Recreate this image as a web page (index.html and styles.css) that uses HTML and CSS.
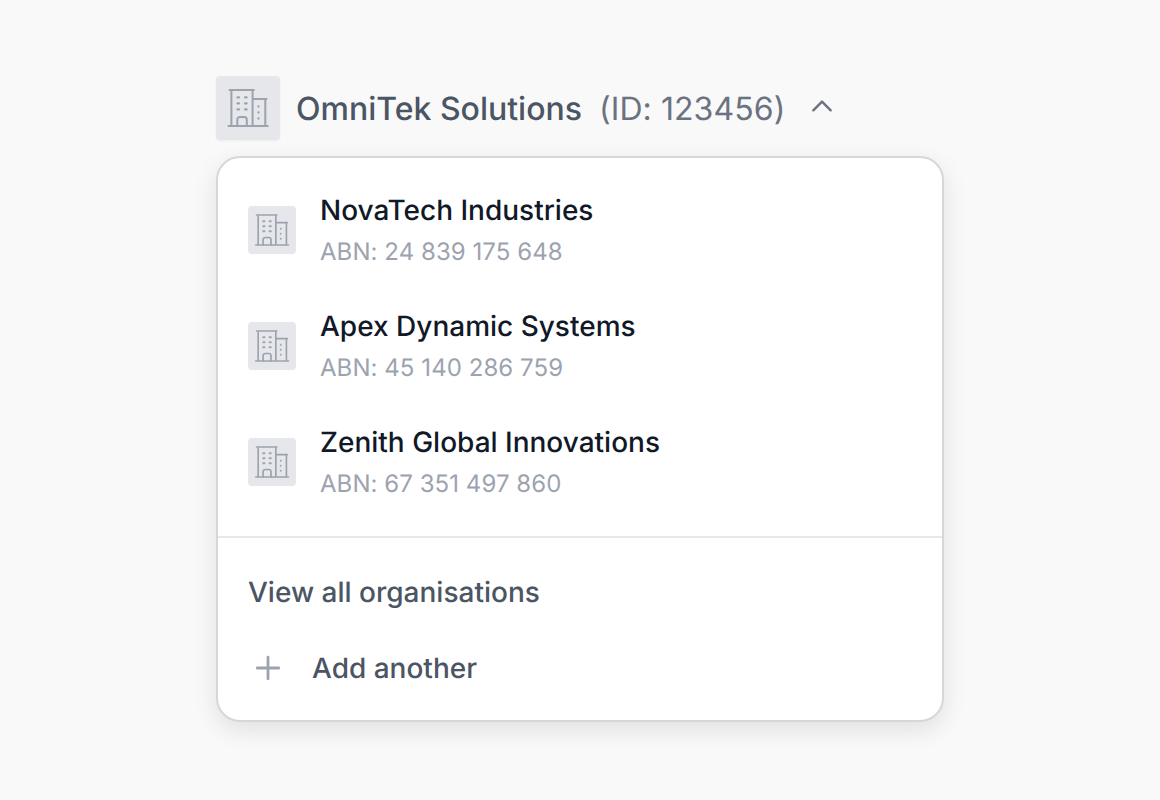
FILE: index.html
```html
<!DOCTYPE html>
<html lang="en">
<head>
  <meta charset="UTF-8" />
  <meta name="viewport" content="width=device-width, initial-scale=1.0"/>
  <title>Organisation switcher</title>
  <link rel="stylesheet" href="styles.css">
</head>
<body>
  <svg class="sprite" aria-hidden="true">
    <symbol id="building" viewBox="0 0 48 48">
      <g fill="none" stroke="currentColor" stroke-width="2" stroke-linecap="round" stroke-linejoin="round">
        <path d="M5.5 6h24.4M7.4 6v36M28.6 6v36M28.6 15.1h13.9M41.3 15.1V42M4.5 42h39.2" />
        <path d="M13.3 42v-6.4a2.6 2.6 0 0 1 2.6-2.6h4.3a2.6 2.6 0 0 1 2.6 2.6V42" />
        <path stroke-width="2.3" d="M13.5 13.4h1.5M21.1 13.4h1.5M13.5 19.4h1.5M21.1 19.4h1.5M13.5 25.4h1.5M21.1 25.4h1.5M34.5 22.4v.1M34.5 28.4v.1M34.5 34.4v.1" />
      </g>
    </symbol>
  </svg>

  <main class="switcher">
    <div class="current">
      <span class="tile tile-large"><svg><use href="#building" /></svg></span>
      <span class="current-name">OmniTek Solutions</span>
      <span class="current-id">(ID: 123456)</span>
      <svg class="chevron" viewBox="0 0 24 16"><path d="M3.3 12.3 12 3.6l8.7 8.7" /></svg>
    </div>

    <div class="menu">
      <ul class="orgs">
        <li class="org">
          <span class="tile"><svg><use href="#building" /></svg></span>
          <div>
            <div class="org-name">NovaTech Industries</div>
            <div class="org-abn">ABN: 24 839 175 648</div>
          </div>
        </li>
        <li class="org">
          <span class="tile"><svg><use href="#building" /></svg></span>
          <div>
            <div class="org-name">Apex Dynamic Systems</div>
            <div class="org-abn">ABN: 45 140 286 759</div>
          </div>
        </li>
        <li class="org">
          <span class="tile"><svg><use href="#building" /></svg></span>
          <div>
            <div class="org-name">Zenith Global Innovations</div>
            <div class="org-abn">ABN: 67 351 497 860</div>
          </div>
        </li>
      </ul>
      <div class="actions">
        <div class="action">View all organisations</div>
        <div class="action">
          <svg class="plus" viewBox="0 0 40 40"><path d="M20 9.2v21.6M9.2 20h21.6" /></svg>
          Add another
        </div>
      </div>
    </div>
  </main>
</body>
</html>
```

FILE: styles.css
```css
* {
  box-sizing: border-box;
}
body {
  min-height: 100vh;
  margin: 0;
  padding: 76px 216px 0;
  background: #f9f9f9;
  font-family: Inter, sans-serif;
  text-rendering: geometricPrecision;
}
.sprite {
  display: none;
}
.switcher {
  width: 728px;
}
.current {
  display: flex;
  align-items: center;
  height: 64px;
  font-size: 32px;
  line-height: 40px;
}
.current-name {
  margin-left: 16px;
  padding-top: 2px;
  color: #4b5563;
  font-weight: 470;
}
.current-id {
  margin-left: 17px;
  padding-top: 2px;
  color: #6b7280;
  font-weight: 370;
  letter-spacing: 0.08px;
}
.chevron {
  width: 24px;
  height: 16px;
  margin-left: 25px;
  margin-bottom: 4px;
}
.chevron path {
  fill: none;
  stroke: #6b7280;
  stroke-width: 2.4;
  stroke-linecap: round;
  stroke-linejoin: round;
}
.tile {
  display: flex;
  align-items: center;
  justify-content: center;
  flex: none;
  width: 48px;
  height: 48px;
  border-radius: 4px;
  background: #e5e7eb;
  color: #9ca3af;
}
.tile svg {
  width: 40px;
  height: 40px;
}
.tile-large {
  width: 64px;
  height: 64px;
  box-shadow: 0 1px 3px rgba(0, 0, 0, 0.05);
}
.tile-large svg {
  width: 48px;
  height: 48px;
}
.menu {
  height: 566px;
  margin-top: 16px;
  border: 2px solid #d5d7da;
  border-radius: 24px;
  background: #fff;
  box-shadow: 0 8px 24px rgba(0, 0, 0, 0.1);
}
.orgs {
  margin: 0;
  padding: 14px 30px 16px;
  list-style: none;
  border-bottom: 2px solid #e5e7eb;
}
.org {
  display: flex;
  align-items: center;
  gap: 24px;
  height: 116px;
}
.org-name {
  padding-top: 2px;
  color: #111827;
  font-size: 28px;
  font-weight: 470;
  line-height: 42px;
}
.org-abn {
  color: #9ca3af;
  font-size: 24px;
  font-weight: 370;
  letter-spacing: 0.06px;
  line-height: 42px;
}
.actions {
  padding: 16px 30px;
}
.action {
  display: flex;
  align-items: center;
  height: 76px;
  color: #4b5563;
  font-size: 28px;
  font-weight: 480;
}
.plus {
  width: 40px;
  height: 40px;
  margin-right: 24px;
}
.plus path {
  fill: none;
  stroke: #9ca3af;
  stroke-width: 2.8;
  stroke-linecap: round;
}
```
